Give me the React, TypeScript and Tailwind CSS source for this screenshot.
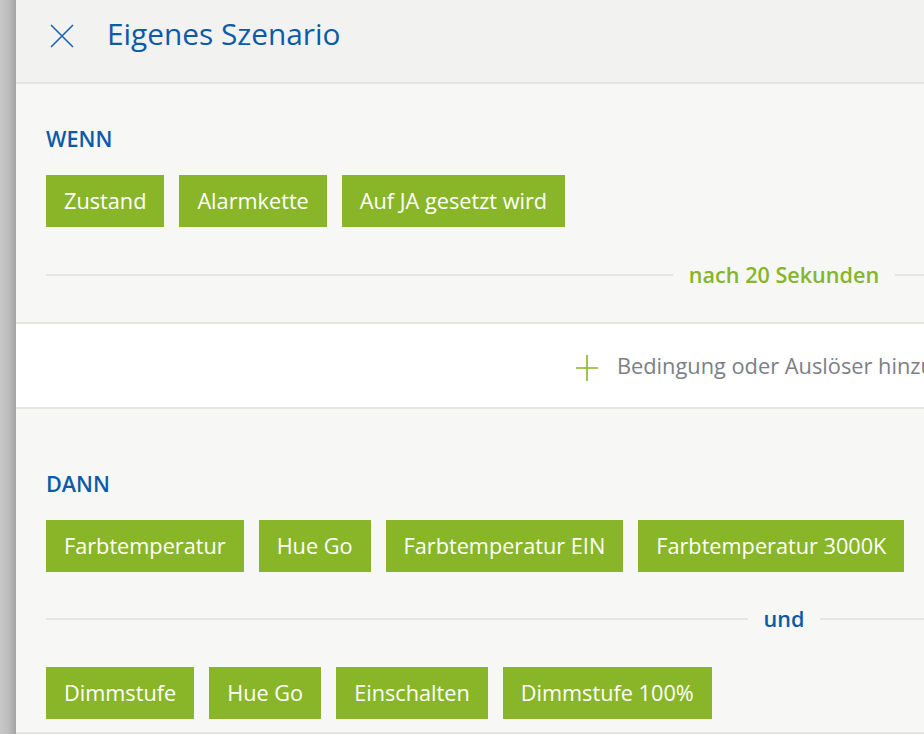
import React from 'react';

const font = { fontFamily: '"Open Sans", "Noto Sans", sans-serif' };

function Chip({ label }: { label: string }) {
  return (
    <div className="h-[52px] px-[18px] flex items-center bg-[#88b628] text-white text-[21.7px] leading-none whitespace-nowrap">
      {label}
    </div>
  );
}

function ChipRow({ items }: { items: string[] }) {
  return (
    <div className="flex gap-[15px]">
      {items.map((t) => (
        <Chip key={t} label={t} />
      ))}
    </div>
  );
}

function Divider({ label, color }: { label: string; color: string }) {
  return (
    <div className="h-[28px] flex items-center">
      <div className="flex-1 h-[2px] bg-[#e4e4e2]" />
      <span className={`px-4 text-[21.6px] font-semibold leading-none ${color}`}>{label}</span>
      <div className="flex-1 h-[2px] bg-[#e4e4e2]" />
    </div>
  );
}

export default function App() {
  return (
    <div className="w-[924px] h-[734px] overflow-hidden flex bg-[#f7f7f5]" style={font}>
      {/* grey backdrop strip */}
      <div className="w-4 shrink-0 bg-gradient-to-r from-[#c8c8c8] via-[#bebebe] to-[#a4a4a4]" />

      <div className="w-[1536px] shrink-0 flex flex-col bg-[#f7f7f5]">
        {/* Header */}
        <header className="h-[84px] shrink-0 flex items-center pl-[34px] pb-[14px] bg-[#f2f2f1] border-b-2 border-[#e4e4e2]">
          <svg width="24" height="24" viewBox="0 0 24 24" className="mt-[3px]">
            <path d="M1 1 L23 23 M23 1 L1 23" stroke="#1a63b0" strokeWidth="1.6" fill="none" />
          </svg>
          <h1 className="ml-[33px] text-[29.8px] leading-none text-[#0b5ba8]">Eigenes Szenario</h1>
        </header>

        {/* WENN */}
        <section className="px-[30px] pt-[41px] pb-[33px] border-b-2 border-[#e4e4e2]">
          <div className="text-[21.6px] leading-[28px] font-semibold text-[#0b5ba8] mb-[22px]">WENN</div>
          <ChipRow items={['Zustand', 'Alarmkette', 'Auf JA gesetzt wird']} />
          <div className="mt-[34px]">
            <Divider label="nach 20 Sekunden" color="text-[#86b52a]" />
          </div>
        </section>

        {/* Add condition */}
        <div className="h-[85px] shrink-0 flex items-center justify-center bg-white border-b-2 border-[#e4e4e2]">
          <svg width="22" height="26" viewBox="0 0 22 26" className="mr-[19px] mt-[4px]">
            <path d="M11 0 V26 M0 13 H22" stroke="#88b628" strokeWidth="1.6" fill="none" />
          </svg>
          <span className="text-[21.8px] leading-none text-[#7b8086] whitespace-nowrap">
            Bedingung oder Auslöser hinzufügen
          </span>
        </div>

        {/* DANN */}
        <section className="px-[30px] pt-[61px] pb-[13px] border-b-2 border-[#e4e4e2]">
          <div className="text-[21.6px] leading-[28px] font-semibold text-[#0b5ba8] mb-[22px]">DANN</div>
          <ChipRow items={['Farbtemperatur', 'Hue Go', 'Farbtemperatur EIN', 'Farbtemperatur 3000K']} />
          <div className="mt-[33px] mb-[34px]">
            <Divider label="und" color="text-[#0b5ba8]" />
          </div>
          <ChipRow items={['Dimmstufe', 'Hue Go', 'Einschalten', 'Dimmstufe 100%']} />
        </section>
      </div>
    </div>
  );
}
